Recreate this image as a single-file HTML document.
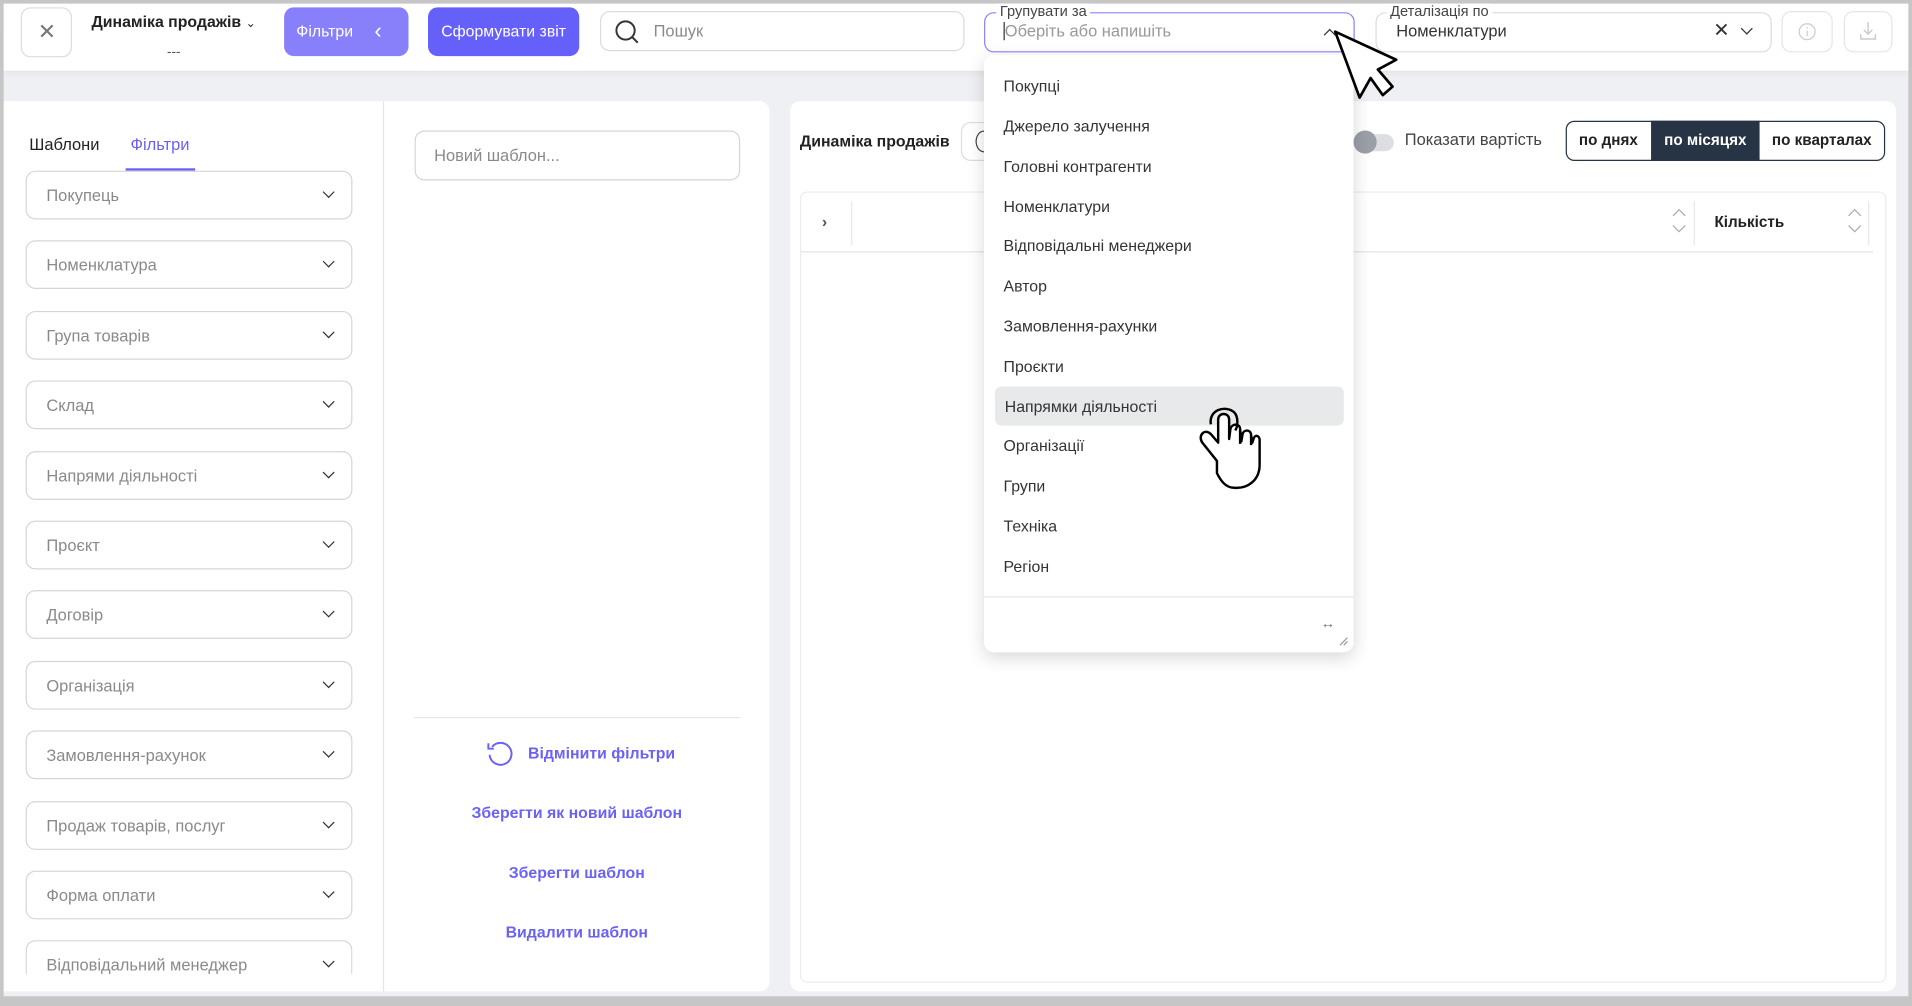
<!DOCTYPE html>
<html><head><meta charset="utf-8"><style>
*{box-sizing:border-box;margin:0;padding:0}
html,body{width:1912px;height:1006px;overflow:hidden;background:#c6c6c6}
#w{position:absolute;left:0;top:0;width:1568px;height:825px;transform:scale(1.219388);transform-origin:0 0;font-family:"Liberation Sans","DejaVu Sans",sans-serif;font-size:13px;color:#222;background:#c6c6c6}
.a{position:absolute}
#frame{left:3px;top:3px;width:1562px;height:814px;background:linear-gradient(#e8eaee,#eef0f3 40px,#eef0f3);overflow:hidden}
.top{left:0;top:0;width:1562px;height:55px;background:#fff;box-shadow:0 2px 6px rgba(0,0,0,.06)}
.btn{border:1px solid #dcdcdc;border-radius:8px;background:#fff}
.sel{border:1px solid #d6d6d6;border-radius:8px;height:40px;background:#fff}
.lab{color:#8a8a8a;font-size:13.5px}
.chev{width:7px;height:7px;border-right:1.7px solid #333;border-bottom:1.7px solid #333;transform:rotate(45deg)}
.link{color:#6a62f5;font-weight:bold;font-size:13px;width:266px;text-align:center;left:340px}
.it{left:16px;font-size:13px;color:#333}
.seg{height:32px;top:99px;line-height:30px;font-weight:bold;font-size:12.5px;text-align:center}
</style></head><body><div id="w">
<div id="frame" class="a">
<div class="a top"></div>
<div class="a btn" style="left:14px;top:3px;width:42px;height:41px"></div>
<div class="a" style="left:28px;top:13px;font-size:18px;color:#777">✕</div>
<div class="a" style="left:72px;top:7px;font-weight:bold;font-size:13px">Динаміка продажів <span style="font-weight:normal;font-size:10px">⌄</span></div>
<div class="a" style="left:134px;top:34px;font-size:11px;color:#555">---</div>
<div class="a" style="left:230px;top:3px;width:102px;height:40px;background:#8880fa;border-radius:8px;color:#fff;line-height:40px;padding-left:10px;font-size:13px">Фільтри <span style="position:absolute;left:74px;top:-1px;font-size:18px">‹</span></div>
<div class="a" style="left:348px;top:3px;width:124px;height:40px;background:#6660fa;border-radius:8px;color:#fff;line-height:40px;text-align:center;font-size:13px">Сформувати звіт</div>
<div class="a btn" style="left:489px;top:6px;width:299px;height:33px"></div>
<svg class="a" style="left:500px;top:12px" width="24" height="24"><circle cx="10" cy="10" r="7.5" fill="none" stroke="#333" stroke-width="1.6"/><line x1="15.5" y1="15.5" x2="20" y2="20" stroke="#333" stroke-width="1.6"/></svg>
<div class="a lab" style="left:533px;top:15px">Пошук</div>
<div class="a" style="left:804px;top:7px;width:304px;height:33px;border:1px solid #8a83f5;border-radius:8px;background:#fff"></div>
<div class="a" style="left:814px;top:-1px;background:#fff;padding:0 3px;font-size:12px;color:#444">Групувати за</div>
<div class="a" style="left:820px;top:15px;width:1px;height:15px;background:#333"></div>
<div class="a lab" style="left:821px;top:15px;color:#999">Оберіть або напишіть</div>
<div class="a chev" style="left:1084px;top:22px;transform:rotate(-135deg)"></div>
<div class="a btn" style="left:1125px;top:7px;width:325px;height:33px"></div>
<div class="a" style="left:1134px;top:-1px;background:#fff;padding:0 3px;font-size:12px;color:#444">Деталізація по</div>
<div class="a" style="left:1142px;top:15px;font-size:13.5px;color:#333">Номенклатури</div>
<div class="a" style="left:1402px;top:12px;font-size:16px;color:#333">✕</div>
<div class="a chev" style="left:1426px;top:17px"></div>
<div class="a btn" style="left:1458px;top:6px;width:42px;height:34px;border-color:#e6e6e6"></div>
<svg class="a" style="left:1471px;top:15px" width="16" height="16"><circle cx="8" cy="8" r="6.5" fill="none" stroke="#ccc"/><line x1="8" y1="7" x2="8" y2="11.5" stroke="#ccc"/><circle cx="8" cy="4.8" r=".7" fill="#ccc"/></svg>
<div class="a btn" style="left:1509px;top:6px;width:40px;height:34px;border-color:#e6e6e6"></div>
<svg class="a" style="left:1521px;top:13px" width="16" height="18"><path d="M8 2v10M4.5 8.5 8 12l3.5-3.5M2 12v4h12v-4" fill="none" stroke="#ccc" stroke-width="1.2"/></svg>

<div class="a" style="left:0;top:80px;width:628px;height:730px;background:#fff;border-radius:0 8px 8px 0"></div>
<div class="a" style="left:311px;top:80px;width:1px;height:730px;background:#e6e6e6"></div>
<div class="a" style="left:21px;top:108px;font-size:13.5px">Шаблони</div>
<div class="a" style="left:104px;top:108px;font-size:13.5px;color:#6a62f5">Фільтри</div>
<div class="a" style="left:100px;top:135px;width:57px;height:2px;background:#6a62f5"></div>
<div id="filters"></div>
<div class="a" style="left:337px;top:104px;width:267px;height:41px;border:1px solid #d6d6d6;border-radius:8px"></div>
<div class="a lab" style="left:353px;top:117px">Новий шаблон...</div>
<div class="a" style="left:337px;top:585px;width:267px;height:1px;background:#e6e6e6"></div>
<svg class="a" style="left:394px;top:602px" width="26" height="26"><path d="M6.5 7.5A9 9 0 1 1 4.5 14" fill="none" stroke="#6a62f5" stroke-width="1.6"/><path d="M3.5 4.5v4.5h4.5" fill="none" stroke="#6a62f5" stroke-width="1.6"/></svg>
<div class="a link" style="left:430px;width:auto;top:607px">Відмінити фільтри</div>
<div class="a link" style="left:337px;top:656px">Зберегти як новий шаблон</div>
<div class="a link" style="left:337px;top:705px">Зберегти шаблон</div>
<div class="a link" style="left:337px;top:754px">Видалити шаблон</div>

<div class="a" style="left:645px;top:80px;width:907px;height:730px;background:#fff;border-radius:8px"></div>
<div class="a" style="left:653px;top:105px;font-weight:bold;font-size:13px">Динаміка продажів</div>
<div class="a" style="left:785px;top:97px;width:40px;height:32px;border:1px solid #ddd;border-radius:8px"></div>
<div class="a" style="left:797px;top:104px;width:14px;height:18px;border:1.5px solid #444;border-radius:50%"></div>
<div class="a" style="left:1108px;top:107px;width:32px;height:14px;border-radius:7px;background:#dcdee2"></div>
<div class="a" style="left:1107px;top:104px;width:19px;height:19px;border-radius:50%;background:#9a9fa8"></div>
<div class="a" style="left:1149px;top:104px;font-size:13.5px;color:#444">Показати вартість</div>
<div class="a" style="left:1281px;top:96px;width:262px;height:33px;border:1px solid #263445;border-radius:7px;overflow:hidden"></div>
<div class="a seg" style="left:1281px;top:96px;width:70px;padding-top:1px">по днях</div>
<div class="a seg" style="left:1351px;top:96px;width:89px;height:33px;background:#263445;color:#fff;padding-top:1px">по місяцях</div>
<div class="a seg" style="left:1440px;top:96px;width:102px;padding-top:1px">по кварталах</div>
<div class="a" style="left:653px;top:154px;width:891px;height:649px;border:1px solid #ececec;border-radius:6px"></div>
<div class="a" style="left:654px;top:203px;width:879px;height:1px;background:#e4e4e4"></div>
<div class="a" style="left:671px;top:171px;font-size:13px;font-weight:bold;color:#555">›</div>
<div class="a" style="left:695px;top:162px;width:1px;height:36px;background:#e8e8e8"></div>
<div class="a" style="left:1386px;top:162px;width:1px;height:36px;background:#e8e8e8"></div>
<div class="a" style="left:1529px;top:162px;width:1px;height:36px;background:#e8e8e8"></div>
<svg class="a" style="left:1367px;top:167px" width="14" height="22"><path d="M2 7 7 2l5 5M2 15l5 5 5-5" fill="none" stroke="#aaa"/></svg>
<svg class="a" style="left:1511px;top:167px" width="14" height="22"><path d="M2 7 7 2l5 5M2 15l5 5 5-5" fill="none" stroke="#aaa"/></svg>
<div class="a" style="left:1403px;top:172px;font-weight:bold;font-size:12.5px">Кількість</div>

<div class="a" style="left:804px;top:42px;width:303px;height:490px;background:#fff;border-radius:8px;box-shadow:0 4px 14px rgba(0,0,0,.16)">
<div class="a" style="left:9px;top:272px;width:286px;height:32px;background:#e8e9eb;border-radius:5px"></div>
<div class="a it" style="top:18px">Покупці</div>
<div class="a it" style="top:51px">Джерело залучення</div>
<div class="a it" style="top:84px">Головні контрагенти</div>
<div class="a it" style="top:117px">Номенклатури</div>
<div class="a it" style="top:149px">Відповідальні менеджери</div>
<div class="a it" style="top:182px">Автор</div>
<div class="a it" style="top:215px">Замовлення-рахунки</div>
<div class="a it" style="top:248px">Проєкти</div>
<div class="a it" style="top:281px;left:17px">Напрямки діяльності</div>
<div class="a it" style="top:313px">Організації</div>
<div class="a it" style="top:346px">Групи</div>
<div class="a it" style="top:379px">Техніка</div>
<div class="a it" style="top:412px">Регіон</div>
<div class="a" style="left:0;top:444px;width:303px;height:1px;background:#e6e6e6"></div>
<div class="a" style="left:276px;top:459px;font-size:12px;color:#777;font-weight:bold">↔</div>
<svg class="a" style="left:291px;top:477px" width="8" height="8"><path d="M1 7 7 1M4 7 7 4" stroke="#999"/></svg>
</div>
</div>
<svg class="a" style="left:0;top:0" width="1568" height="825">
<path d="M1095 26 L1115 80 L1124 64 L1134 78 L1142 71 L1130 57 L1145 49 Z" fill="#fff" stroke="#000" stroke-width="2.2" stroke-linejoin="round"/>
<g fill="#fff" stroke="#000" stroke-width="2" stroke-linejoin="round">
<path d="M998 378 L986 363 C982 357 988 351 993 356 L999 363 L999 344 C999 338 1008 338 1008 344 L1008 360 L1009 352 C1010 347 1017 347 1017 352 L1018 362 L1019 356 C1020 352 1026 352 1026 357 L1027 363 L1028 360 C1029 356 1033 357 1033 361 L1033 381 C1033 394 1023 401 1012 400 C1005 400 1001 394 998 388 Z"/>
<path d="M993 348 C991 336 1005 332 1012 338 C1016 342 1015 350 1013 353" fill="none"/>
<path d="M1017 352 L1017 364 M1026 357 L1026 365" fill="none"/>
</g>
</svg>
</div>
<script>
var f=["Покупець","Номенклатура","Група товарів","Склад","Напрями діяльності","Проєкт","Договір","Організація","Замовлення-рахунок","Продаж товарів, послуг","Форма оплати","Відповідальний менеджер"];
var h="";f.forEach(function(t,i){var y=137+i*57.4;h+='<div class="a sel" style="left:18px;top:'+y+'px;width:268px;'+(i==11?'height:28px;border-bottom:none;border-radius:8px 8px 0 0;':'')+'"></div><div class="a lab" style="left:35px;top:'+(y+13)+'px">'+t+'</div><div class="a chev" style="left:263px;top:'+(y+14)+'px"></div>';});
document.getElementById("filters").outerHTML=h;
</script>
</body></html>
